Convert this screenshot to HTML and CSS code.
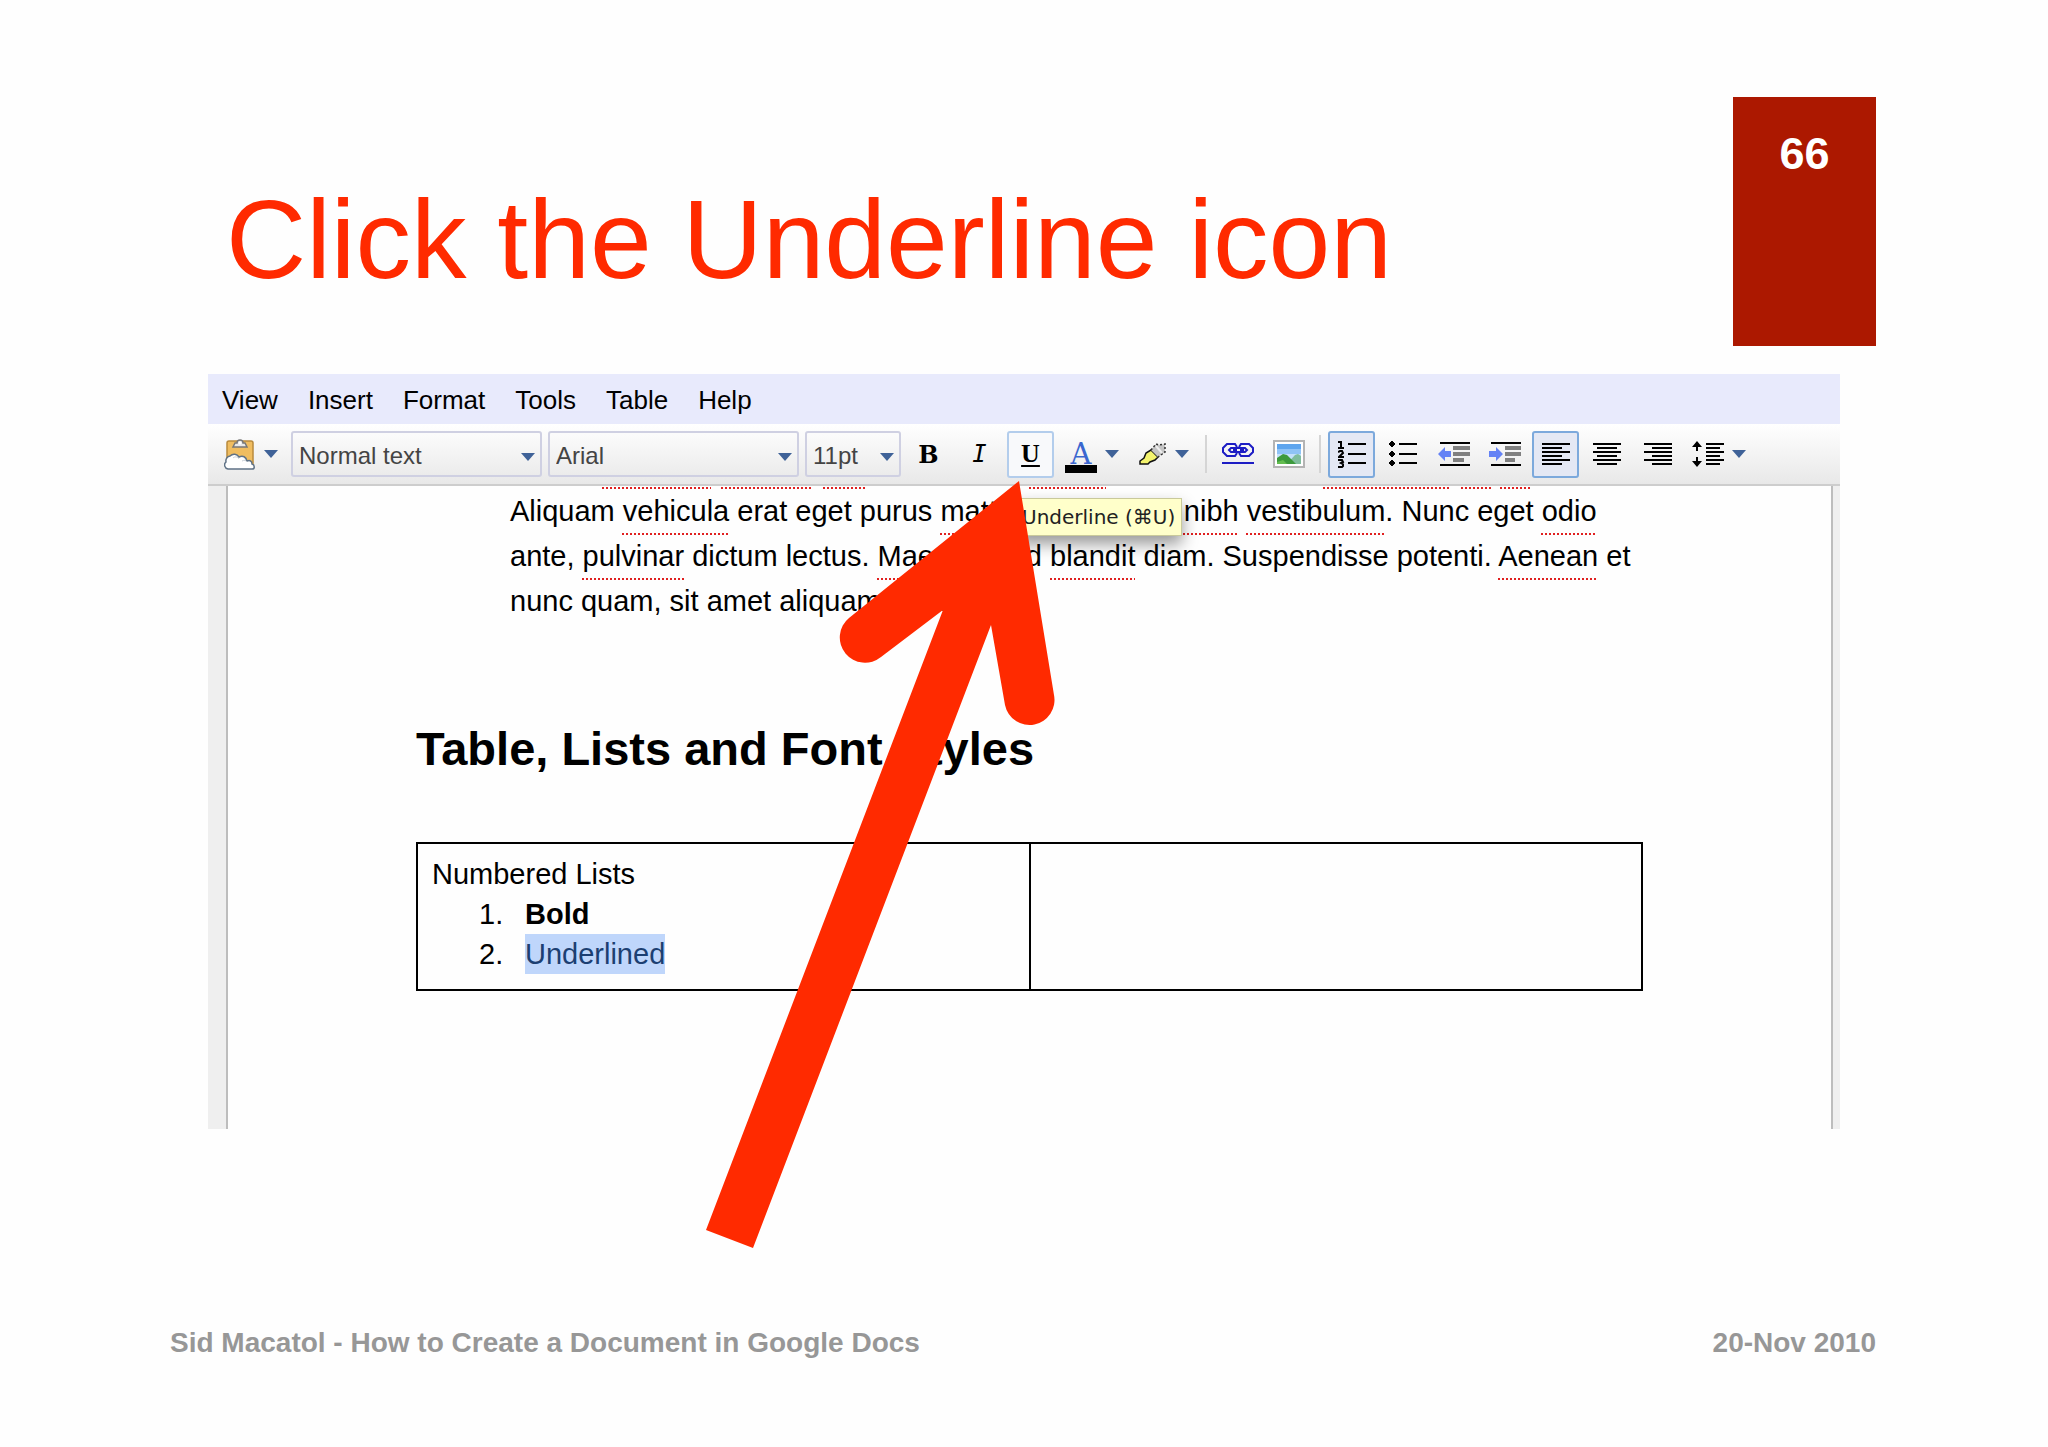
FILE: index.html
```html
<!DOCTYPE html>
<html lang="en">
<head>
    <meta charset="UTF-8">
    <meta name="viewport" content="width=device-width, initial-scale=1.0">
    <title>Click the Underline icon</title>
    <link rel="stylesheet" href="styles.css">
</head>
<body>
    <header class="slide-header">
        <h1>Click the Underline icon</h1>
        <div class="slide-number">66</div>
    </header>

    <main class="editor">
        <nav class="menu">
            <button>View</button>
            <button>Insert</button>
            <button>Format</button>
            <button>Tools</button>
            <button>Table</button>
            <button>Help</button>
        </nav>

        <div class="toolbar">
            <button class="tool tool-paste" aria-label="Web clipboard">
                <svg width="32" height="32" viewBox="0 0 32 32">
                    <rect x="3" y="3" width="26" height="25" rx="2" fill="#f0bd60" stroke="#b98a3c" stroke-width="1.5"/>
                    <path d="M9 9h14l-2-4h-2a3 3 0 0 0-6 0h-2z" fill="#e9e9e9" stroke="#777" stroke-width="1.5"/>
                    <circle cx="16" cy="5" r="1.5" fill="#fff"/>
                    <path d="M4 31a4 4 0 0 1-2-7 5 5 0 0 1 4-6c3-3 7-2 9 1 4-2 7 0 8 4 3-1 5 0 5 3 3 1 3 5 0 5z" fill="#fff" stroke="#5f7286" stroke-width="1.5"/>
                    <path d="M9 20c2-2 5-1 6 1M18 23c2-1 4-1 5 1" fill="none" stroke="#c8ced6"/>
                </svg>
                <span class="caret"></span>
            </button>
            <div class="picker picker-wide">
                <select aria-label="Style"><option>Normal text</option></select>
                <span class="caret"></span>
            </div>
            <div class="picker picker-wide">
                <select aria-label="Font"><option>Arial</option></select>
                <span class="caret"></span>
            </div>
            <div class="picker picker-size">
                <select aria-label="Font size"><option>11pt</option></select>
                <span class="caret"></span>
            </div>
            <button class="tool bold" aria-label="Bold">B</button>
            <button class="tool italic" aria-label="Italic">I</button>
            <div class="tool-wrap">
                <button class="tool underline hover" aria-label="Underline">U</button>
                <div class="tooltip" role="tooltip">Underline (⌘U)</div>
            </div>
            <button class="tool tool-menu" aria-label="Text color">
                <span class="text-color">A</span>
                <span class="caret"></span>
            </button>
            <button class="tool tool-menu" aria-label="Highlight color">
                <svg width="28" height="24" viewBox="0 0 28 24">
                    <path d="M12 8l7 7-3 3-5 2-2 2H1v-3l4-3 2-5z" fill="#f4f46e" stroke="#111" stroke-width="1.5"/>
                    <path d="M12 8l5-6 3 1 6-1v8l-7 5z" fill="#c4c4c4"/>
                    <path d="M12 8l5-6 3 1 6-1v8l-7 5" fill="none" stroke="#333" stroke-width="1.5" stroke-dasharray="2 2"/>
                    <path d="M17 4l6 7" stroke="#eee" stroke-width="2"/>
                </svg>
                <span class="caret"></span>
            </button>
            <span class="separator"></span>
            <button class="tool" aria-label="Insert link">
                <svg width="32" height="24" viewBox="0 0 32 24" fill="none" stroke="#1d1dc4" stroke-width="2">
                    <path d="M15 5l-2-3H5L1 6v4l4 4h8l2-3M17 5l2-3h8l4 4v4l-4 4h-8l-2-3"/>
                    <path d="M9 6h14l2 2-2 2H9L7 8zM11 8h4M18 8h4M0 21h32"/>
                </svg>
            </button>
            <button class="tool" aria-label="Insert image">
                <svg width="32" height="28" viewBox="0 0 32 28">
                    <rect x="1" y="1" width="30" height="26" fill="#fff" stroke="#b4b4b4" stroke-width="2"/>
                    <rect x="4" y="4" width="24" height="20" fill="#5ea5ee"/>
                    <path d="M4 9h24v5H4z" fill="#8fc3f6"/>
                    <path d="M4 14h24v5H4z" fill="#c4e0fb"/>
                    <path d="M14 24l8-9 3-1 3 2v8z" fill="#7fbd9d"/>
                    <path d="M4 18l6-4 4 1 9 9H4z" fill="#3c9a3c"/>
                    <path d="M4 22l6-2 4 4H4z" fill="#63bd4f"/>
                </svg>
            </button>
            <span class="separator"></span>
            <button class="tool active" aria-label="Numbered list">
                <svg width="28" height="28" viewBox="0 0 28 28" fill="none" stroke="#000" stroke-width="2">
                    <path d="M10 4h18M10 14h18M10 23h18"/>
                    <path d="M0 2h3v6M0 8h6M0 12l2-1h2l1 2-4 4h5M0 20h4l1 2-2 1 2 1v2l-1 1H0"/>
                </svg>
            </button>
            <button class="tool" aria-label="Bulleted list">
                <svg width="28" height="28" viewBox="0 0 28 28" fill="none" stroke="#000" stroke-width="2">
                    <path d="M10 4h18M10 14h18M10 23h18"/>
                    <path d="M0 4h6M3 1v6M0 14h6M3 11v6M0 23h6M3 20v6"/>
                    <path d="M1 4h4M1 14h4M1 23h4" stroke-width="4"/>
                </svg>
            </button>
            <button class="tool" aria-label="Decrease indent">
                <svg width="32" height="26" viewBox="0 0 32 26" fill="none">
                    <path d="M2 2h30M2 24h30" stroke="#000" stroke-width="2"/>
                    <path d="M15 7h17M15 13h17M15 19h11" stroke="#808080" stroke-width="4"/>
                    <path d="M0 13l7-7v4h6v6H7v4z" fill="#6482f5"/>
                </svg>
            </button>
            <button class="tool" aria-label="Increase indent">
                <svg width="32" height="26" viewBox="0 0 32 26" fill="none">
                    <path d="M2 2h30M2 24h30" stroke="#000" stroke-width="2"/>
                    <path d="M16 7h16M16 13h16M16 19h10" stroke="#808080" stroke-width="4"/>
                    <path d="M14 13L7 6v4H0v6h7v4z" fill="#6482f5"/>
                </svg>
            </button>
            <button class="tool active" aria-label="Align left">
                <svg width="28" height="24" viewBox="0 0 28 24" fill="none" stroke="#000" stroke-width="2">
                    <path d="M0 2h28M0 6h20M0 10h28M0 14h20M0 18h28M0 22h20"/>
                </svg>
            </button>
            <button class="tool" aria-label="Align center">
                <svg width="28" height="24" viewBox="0 0 28 24" fill="none" stroke="#000" stroke-width="2">
                    <path d="M0 2h28M4 6h20M0 10h28M4 14h20M0 18h28M4 22h20"/>
                </svg>
            </button>
            <button class="tool" aria-label="Align right">
                <svg width="28" height="24" viewBox="0 0 28 24" fill="none" stroke="#000" stroke-width="2">
                    <path d="M0 2h28M8 6h20M0 10h28M8 14h20M0 18h28M8 22h20"/>
                </svg>
            </button>
            <button class="tool tool-menu" aria-label="Line spacing">
                <svg width="32" height="26" viewBox="0 0 32 26" fill="none" stroke="#000" stroke-width="2">
                    <path d="M14 3h18M14 7h14M14 11h18M14 15h14M14 19h18M14 23h14M5 3v7M5 16v7"/>
                    <path d="M5 0l5 6H0zM5 26l5-6H0z" fill="#000" stroke="none"/>
                </svg>
                <span class="caret"></span>
            </button>
        </div>

        <div class="canvas">
            <article class="page">
                <!-- spelling marks of the line scrolled under the toolbar -->
                <svg class="scrolled-line" width="1020" height="2" viewBox="0 0 1020 2">
                    <path d="M92 1h109M211 1h92M313 1h42M519 1h77M813 1h128M951 1h30M990 1h30" stroke="#e02020" stroke-width="2" stroke-dasharray="2 2"/>
                </svg>
                <p>
                    Aliquam <u>vehicula</u> erat eget purus <u>mattis</u> posuere vel <u>nibh</u> <u>vestibulum</u>. Nunc eget <u>odio</u><br>
                    ante, <u>pulvinar</u> dictum lectus. <u>Maecenas</u> id <u>blandit</u> diam. Suspendisse potenti. <u>Aenean</u> et<br>
                    nunc quam, sit amet aliquam nunc.
                </p>
                <h2>Table, Lists and Font Styles</h2>
                <table>
                    <tr>
                        <td>
                            Numbered Lists
                            <ol>
                                <li><b>Bold</b></li>
                                <li><mark>Underlined</mark></li>
                            </ol>
                        </td>
                        <td></td>
                    </tr>
                </table>
            </article>
        </div>

        <svg class="pointer" width="349" height="768" viewBox="0 0 349 768">
            <path d="M313 0L348 214A25 25 0 0 1 299 224L285 144L47 767L0 749L237 129L175 176A25 25 0 0 1 143 137Z" fill="#ff2a00"/>
        </svg>
    </main>

    <footer class="slide-footer">
        <span>Sid Macatol - How to Create a Document in Google Docs</span>
        <time datetime="2010-11-20">20-Nov 2010</time>
    </footer>
</body>
</html>
```
FILE: styles.css
```css
* {
    box-sizing: border-box;
}
body {
    margin: 0;
    background: #fefefe;
    color: #000;
    font-family: Arial, "Liberation Sans", sans-serif;
}
button, select {
    margin: 0;
    padding: 0;
    border: 0;
    background: none;
    color: inherit;
    font-family: inherit;
}

/* slide */
.slide-header {
    display: flex;
    justify-content: space-between;
    padding: 97px 172px 0 226px;
}
h1 {
    margin: 81px 0 0;
    color: #ff2a00;
    font-size: 111px;
    font-weight: normal;
    line-height: 124px;
}
.slide-number {
    width: 143px;
    height: 249px;
    padding-top: 31px;
    background: #ac1800;
    color: #fff;
    font-size: 45px;
    font-weight: bold;
    line-height: 52px;
    text-align: center;
}
.slide-footer {
    display: flex;
    justify-content: space-between;
    margin-top: 198px;
    padding: 0 172px 80px 170px;
    color: #979797;
    font-size: 28px;
    font-weight: bold;
    line-height: 32px;
}

/* editor */
.editor {
    position: relative;
    margin: 28px 208px 0;
}
.menu {
    display: flex;
    gap: 30px;
    height: 50px;
    padding: 2px 14px 0;
    background: #e8eafc;
}
.menu button {
    font-size: 26px;
}
.toolbar {
    display: flex;
    align-items: center;
    gap: 4px;
    height: 62px;
    padding: 0 14px;
    border-bottom: 2px solid #cdcdcd;
    background: linear-gradient(#fff, #e8e8e8);
}
.caret {
    flex: none;
    width: 14px;
    height: 8px;
    background: #3f6298;
    clip-path: polygon(0 0, 100% 0, 50% 100%);
}
.picker {
    position: relative;
}
.picker-wide {
    width: 251px;
    margin-right: 2px;
}
.picker-size {
    width: 96px;
}
.picker select {
    appearance: none;
    display: block;
    width: 100%;
    height: 46px;
    padding: 2px 6px 0;
    border: 2px solid #cfd0e2;
    border-radius: 3px;
    color: #444;
    font-size: 24px;
}
.picker .caret {
    position: absolute;
    top: 22px;
    right: 7px;
    pointer-events: none;
}
.tool {
    display: flex;
    align-items: center;
    justify-content: center;
    flex: none;
    width: 47px;
    height: 47px;
    border: 2px solid transparent;
    border-radius: 3px;
}
.tool.hover {
    border-color: #b3cdec;
    background: #f8f9fb;
}
.tool.active {
    border-color: #7ca9dc;
    background: #e4e8f4;
}
.tool-paste {
    justify-content: flex-start;
    gap: 8px;
    width: 65px;
}
.tool-menu {
    gap: 8px;
    width: 68px;
}
.bold {
    font-family: "DejaVu Serif", serif;
    font-size: 24px;
    font-weight: bold;
}
.italic {
    font-family: "DejaVu Sans Mono", monospace;
    font-size: 24px;
    font-style: italic;
}
.underline {
    font-family: "Liberation Serif", serif;
    font-size: 26px;
    font-weight: bold;
    text-decoration: underline 2px;
    text-underline-offset: 3px;
}
.text-color {
    width: 32px;
    padding-top: 8px;
    border-bottom: 8px solid #000;
    color: #3a66cf;
    font-family: "DejaVu Serif", serif;
    font-size: 29px;
    line-height: 22px;
}
.separator {
    width: 2px;
    height: 38px;
    margin: 0 3px;
    background: #d5d5d5;
}
.tool-wrap {
    position: relative;
}
.tooltip {
    position: absolute;
    top: 67px;
    left: 8px;
    z-index: 1;
    padding: 0 6px;
    border: 1px solid #c9c99b;
    background: #ffffca;
    box-shadow: 0 8px 16px rgba(0,0,0,0.4);
    color: #222;
    font-family: "DejaVu Sans", sans-serif;
    font-size: 20px;
    line-height: 36px;
    white-space: nowrap;
}

/* document */
.canvas {
    padding: 0 7px 0 18px;
    background: #efefef;
}
.page {
    min-height: 643px;
    padding: 1px 188px 0 188px;
    border: solid #bdbdbd;
    border-width: 0 2px;
    background: #fefefe;
    font-size: 29px;
}
.scrolled-line {
    display: block;
    margin-left: 94px;
}
p {
    margin: 0 0 0 94px;
    line-height: 45px;
    white-space: nowrap;
}
u {
    text-decoration: underline dotted #e02020 2px;
    text-decoration-skip-ink: none;
    text-underline-offset: 12px;
}
h2 {
    margin: 98px 0 66px;
    font-size: 47px;
    line-height: 54px;
}
table {
    width: 100%;
    border-collapse: collapse;
    table-layout: fixed;
}
td {
    padding: 10px 14px 15px;
    border: 2px solid #000;
    line-height: 40px;
    vertical-align: top;
}
ol {
    margin: 0;
    padding: 0 0 0 47px;
    list-style: none;
    counter-reset: item;
}
li {
    display: flex;
    counter-increment: item;
}
li::before {
    content: counter(item) ".";
    width: 46px;
}
mark {
    background: #bfd6fb;
    color: #1c3f72;
}

/* arrow drawn over the editor */
.pointer {
    position: absolute;
    top: 107px;
    left: 498px;
    z-index: 2;
    pointer-events: none;
}
```
